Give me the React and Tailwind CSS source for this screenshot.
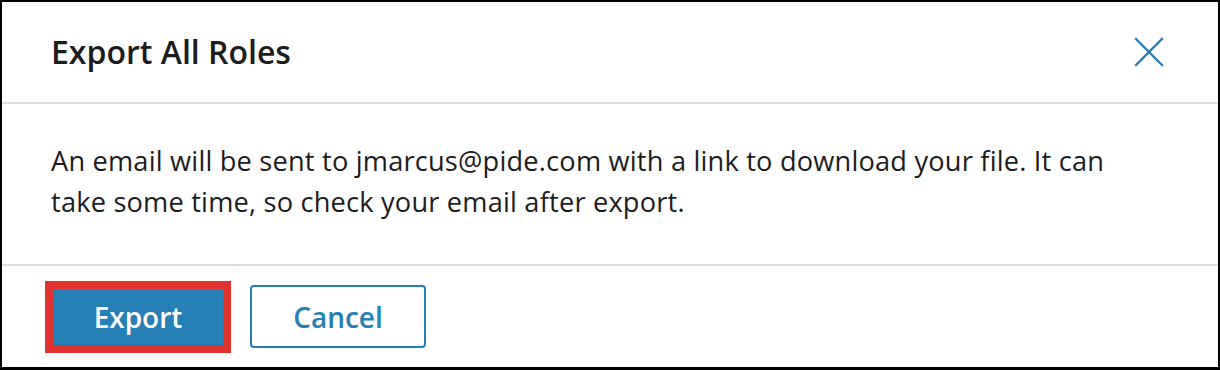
import React from "react";

const CloseIcon = () => (
  <svg width="30" height="30" viewBox="0 0 30 30" fill="none">
    <path d="M2 2 L28 28 M28 2 L2 28" stroke="#2a7fb4" strokeWidth="2.4" strokeLinecap="square" />
  </svg>
);

const App = () => {
  return (
    <div
      className="w-[1220px] h-[370px] bg-white border-t-2 border-l-2 border-r-2 border-b-[3px] border-black flex flex-col text-[#1c1c1c]"
      style={{ fontFamily: '"Open Sans", "Noto Sans", sans-serif' }}
    >
      {/* Header */}
      <div className="h-[102px] shrink-0 flex items-center justify-between pl-[49px] pr-[54px] border-b-2 border-[#d8dde1]">
        <h2 className="text-[32px] font-semibold leading-none">Export All Roles</h2>
        <button className="w-[30px] h-[30px] flex items-center justify-center">
          <CloseIcon />
        </button>
      </div>

      {/* Body */}
      <div className="h-[162px] shrink-0 border-b-2 border-[#d8dde1] pl-[49px] pr-[80px] pt-[36px]">
        <p className="text-[27.2px] leading-[41px] tracking-[0.2px]">
          An email will be sent to jmarcus@pide.com with a link to download your file. It can take some time, so check your email after export.
        </p>
      </div>

      {/* Footer */}
      <div className="flex-1 flex items-center gap-[19px] pl-[43px]">
        <div className="w-[186px] h-[72px] border-[8px] border-[#e0332f] bg-[#2680b5] flex items-center justify-center">
          <span className="text-white text-[28px] font-semibold">Export</span>
        </div>
        <button className="w-[176px] h-[63px] border-2 border-[#2680b5] rounded-[4px] text-[#2680b5] text-[28px] font-semibold flex items-center justify-center">
          Cancel
        </button>
      </div>
    </div>
  );
};

export default App;
